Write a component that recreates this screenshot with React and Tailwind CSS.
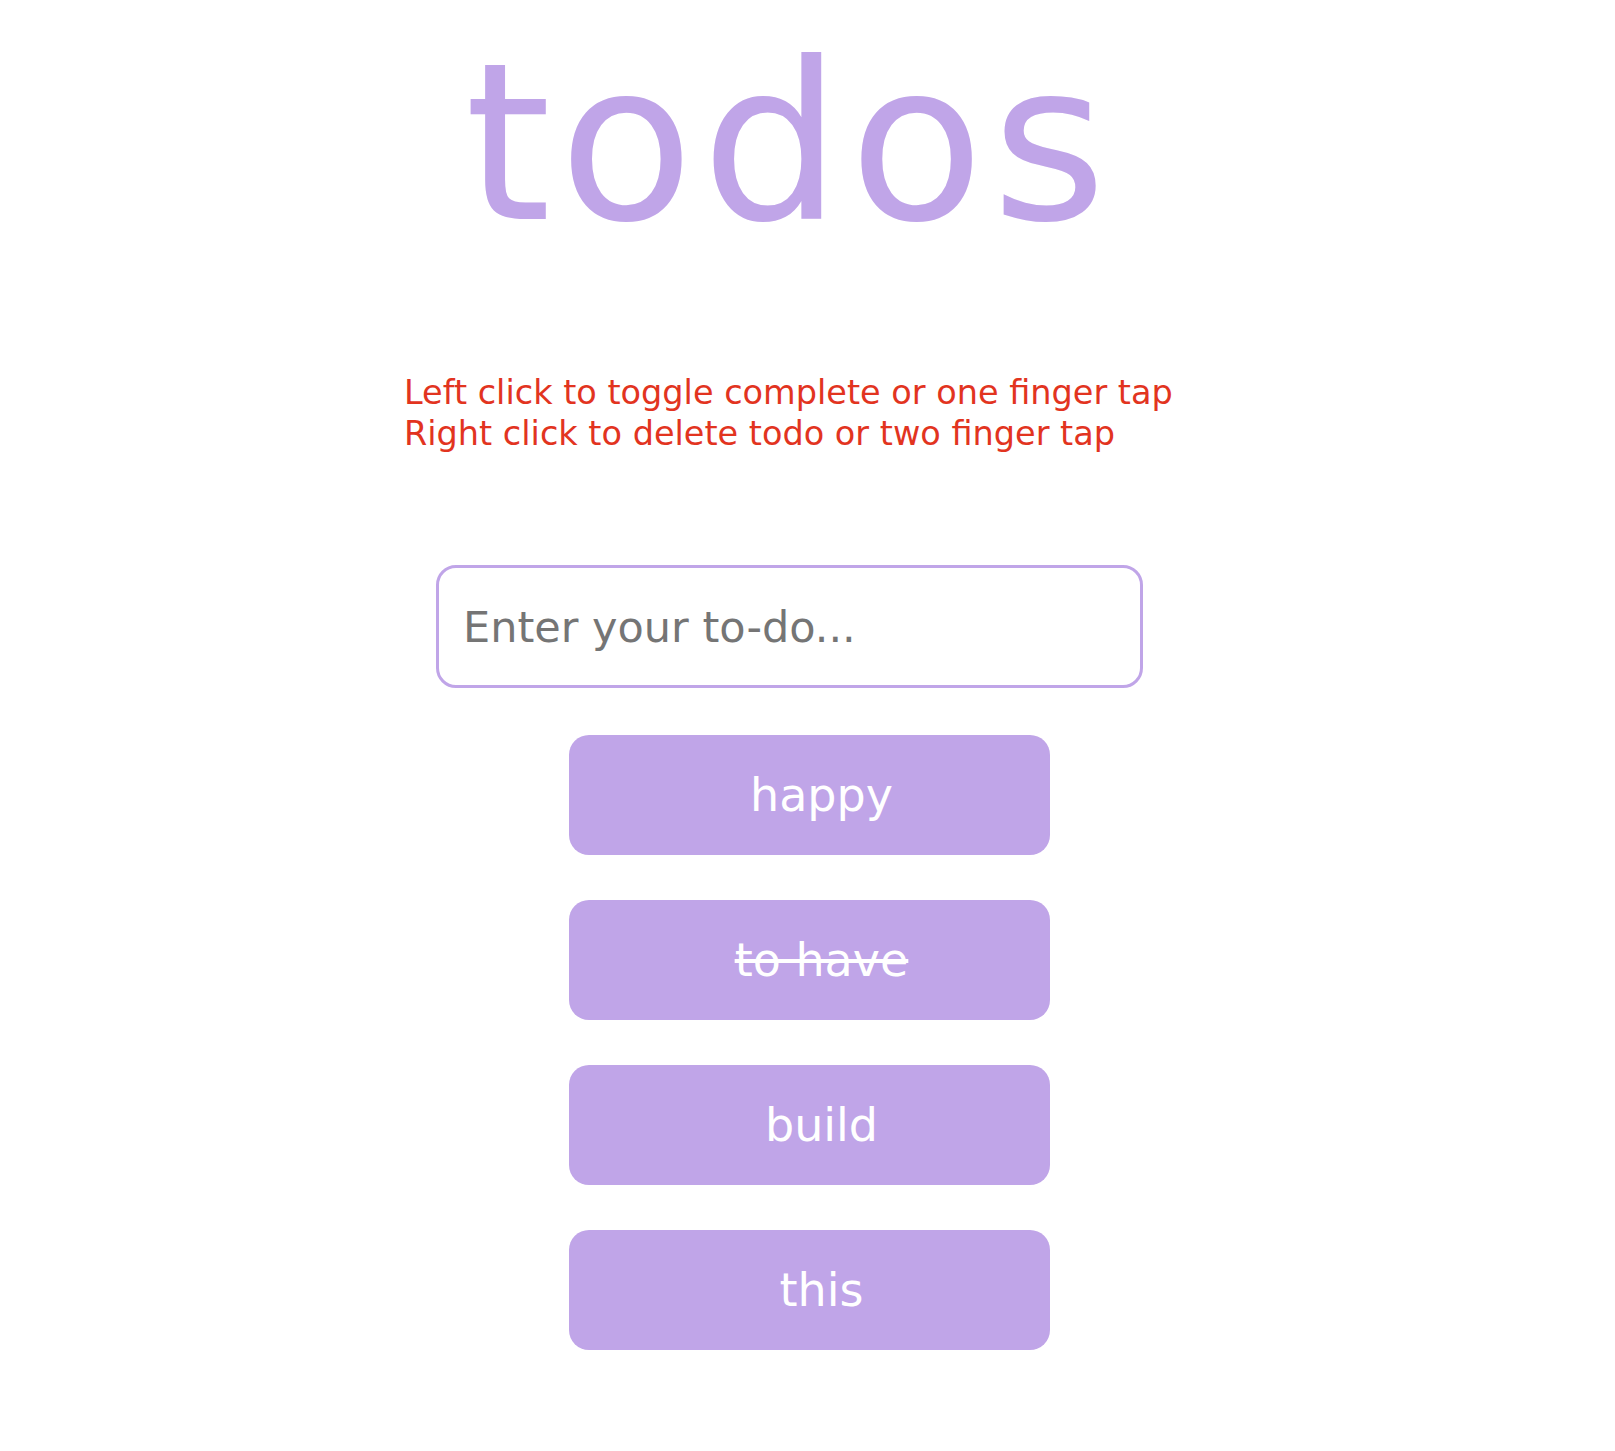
const todos = [
  { text: 'happy', done: false },
  { text: 'to have', done: true },
  { text: 'build', done: false },
  { text: 'this', done: false },
];

export default function App() {
  return (
    <div className="min-h-screen bg-white flex justify-center pr-[36px] font-['DejaVu_Sans',sans-serif]">
      <div className="w-[707px] flex flex-col">
        {/* Title */}
        <h1 className="mt-[11px] text-center text-[220px] leading-[1.2] font-normal tracking-[8px] text-[#c0a5e8]">
          todos
        </h1>

        {/* Instructions */}
        <div className="mt-[97px] -ml-[32px] text-[33.5px] leading-[41px] text-[#e2341f] whitespace-nowrap">
          <p>Left click to toggle complete or one finger tap</p>
          <p>Right click to delete todo or two finger tap</p>
        </div>

        {/* Input */}
        <input
          type="text"
          placeholder="Enter your to-do..."
          className="mt-[111px] h-[123px] w-full rounded-[20px] border-[3px] border-[#c0a5e8] bg-white px-[24px] text-[43px] text-gray-700 outline-none placeholder:text-[#757575]"
        />

        {/* Todo list */}
        <ul className="mt-[47px] pl-[40px] flex flex-col items-center gap-[45px]">
          {todos.map((t) => (
            <li
              key={t.text}
              className={`w-[481px] h-[120px] rounded-[20px] bg-[#c0a5e8] flex items-center justify-center pl-[24px] text-[46px] text-white ${
                t.done ? 'line-through' : ''
              }`}
            >
              {t.text}
            </li>
          ))}
        </ul>
      </div>
    </div>
  );
}
